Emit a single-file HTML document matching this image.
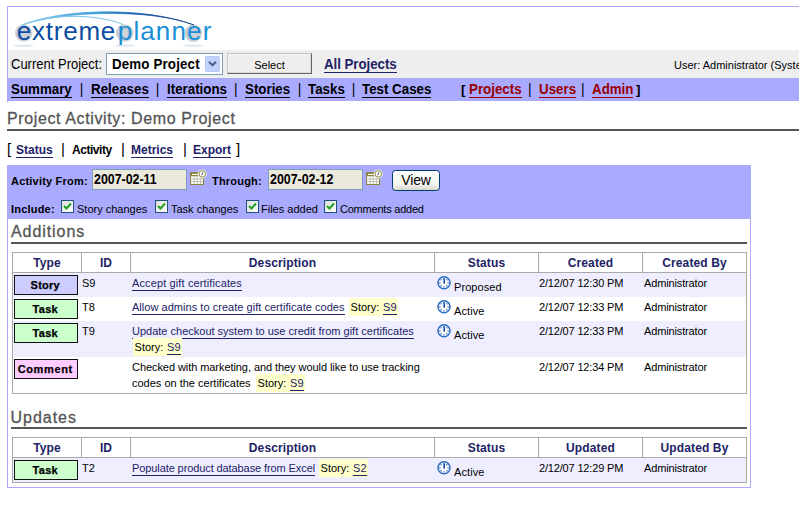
<!DOCTYPE html>
<html><head><meta charset="utf-8"><title>ExtremePlanner - Project Activity</title>
<style>
*{box-sizing:border-box;margin:0;padding:0}
html,body{width:799px;height:510px;overflow:hidden;background:#fff}
body{font-family:"Liberation Sans",Arial,sans-serif;font-size:11px;color:#000;position:relative}
.a{position:absolute;white-space:nowrap;line-height:1}
a{color:inherit;text-decoration:none}
#frame{left:7px;top:6px;width:900px;height:96px;border:1px solid #aaaaff;border-bottom:0}
#gray{left:8px;top:50px;width:900px;height:28px;background:#eeeeee}
#nav{left:8px;top:78px;width:900px;height:23px;background:#aaaaff}
.nv{font-size:13.33px;font-weight:bold;top:83px;color:#000}
.nv a{border-bottom:1px solid #000;padding-bottom:1px;display:inline-block}
.nv.r a{color:#990000;border-color:#990000}
.nv.sep{font-weight:normal;font-size:13.8px;top:82.6px}
.sy{display:inline-block;transform:scaleY(1.075);transform-origin:0 84.6%}
h1.a{font-size:16px;font-weight:normal;color:#555;letter-spacing:.62px;-webkit-text-stroke:.3px #555}
.rule{background:#555;height:2px}
.sn{font-size:12px;font-weight:bold;top:144px;color:#222266}
.sn a{border-bottom:1px solid #222266;padding-bottom:1px;display:inline-block}
#filter{left:7px;top:165px;width:744px;height:54px;background:#aaaaff}
#box{left:7px;top:218px;width:744px;height:270px;border:1px solid #aaaaff;border-top:0}
.lb{font-weight:bold;font-size:11px;letter-spacing:.2px}
.inp{height:21px;width:95px;background:#ebe9dc;border:1px solid #7f9db9;font-weight:bold;font-size:14px;padding:2px 0 0 .6px}
.inp span{display:inline-block;transform:scaleX(.885);transform-origin:0 0}
.cb{width:13px;height:13px;border:1px solid #1c5180;background:linear-gradient(135deg,#dcdcd7,#fff)}
.cb svg{position:absolute;left:1px;top:1px}
table{border-collapse:collapse}
.tb{left:12px;width:735px;border:1px solid #aaa;background:#fff}
.th{top:0;height:20px;border-right:1px solid #aaa;border-bottom:1px solid #aaa;font-weight:bold;font-size:12px;color:#222266;text-align:center;padding-top:4px;letter-spacing:.12px}
.row{left:0;width:733px}
.alt{background:#eeeeff}
.ty{left:1px;width:64px;height:20px;border:1px solid #111;font-weight:bold;font-size:11px;text-align:center;padding:4px 1.5px 0 0;letter-spacing:.25px;-webkit-text-stroke:.25px #000}
.story{background:#ccccff}.task{background:#ccffcc}.comment{background:#ffccff}
.lk{color:#222266;border-bottom:1px solid #222266;padding-bottom:1px;display:inline-block}
.st{background:#ffffcc;height:18px;width:49px;padding:4px 0 0 1.6px;word-spacing:.7px}
.st a{border-bottom:1px solid #222266;color:#222266;display:inline-block;padding-bottom:1px}
.t{font-size:11px}
</style></head><body>
<div class="a" id="frame"></div>
<div class="a" id="gray"></div>
<div class="a" id="nav"></div>

<!-- logo -->
<svg class="a" style="left:8px;top:7px" width="220" height="43" viewBox="8 7 220 43">
 <defs><linearGradient id="g1" x1="0" x2="1"><stop offset="0" stop-color="#8fd0f0"/><stop offset=".45" stop-color="#3a9ad8"/><stop offset=".7" stop-color="#1a55a8"/><stop offset="1" stop-color="#0a3a8c"/></linearGradient>
 <radialGradient id="g2"><stop offset="0" stop-color="#d4d6dc"/><stop offset=".8" stop-color="#c4c7cf"/><stop offset="1" stop-color="#d8dae0"/></radialGradient></defs>
 <circle cx="23.7" cy="33" r="8.8" fill="url(#g2)"/>
 <circle cx="124.8" cy="33" r="8.8" fill="url(#g2)"/>
 <circle cx="193.3" cy="33.2" r="8.8" fill="url(#g2)"/>
 <ellipse cx="23.7" cy="45.6" rx="10" ry="1.1" fill="#dce8f2"/>
 <ellipse cx="124.8" cy="45.6" rx="10" ry="1.1" fill="#dce8f2"/>
 <ellipse cx="193.3" cy="45.6" rx="10" ry="1.1" fill="#dce8f2"/>
 <path d="M21 25.5 C 55 10, 140 5, 194 25 C 150 8, 60 11, 21 25.5Z" fill="url(#g1)" stroke="url(#g1)" stroke-width=".7"/>
 <path d="M22 25.2 C 50 14, 95 13, 123 24.5" fill="none" stroke="#7cc4ea" stroke-width="1"/>
 <text x="16.8" y="39.7" font-family="Liberation Sans, Arial, sans-serif" font-size="26" fill="#0b4ea2" textLength="98.5" lengthAdjust="spacing">extreme</text>
 <text x="117.8" y="39.7" font-family="Liberation Sans, Arial, sans-serif" font-size="26" fill="#1c8fd6" textLength="93.5" lengthAdjust="spacing">planner</text>
</svg>

<div class="a" style="left:11px;top:58px;font-size:13px"><span class="sy">Current Project:</span></div>
<div class="a" style="left:106px;top:53px;width:117px;height:22px;border:1px solid #7f9db9;background:#fff"></div>
<div class="a" style="left:112px;top:58px;font-size:13.33px;font-weight:bold;letter-spacing:.15px"><span class="sy">Demo Project</span></div>
<svg class="a" style="left:205px;top:56px" width="15" height="16"><rect width="15" height="16" rx="2" fill="#c1d2fb"/><rect x=".5" y=".5" width="14" height="15" rx="2" fill="none" stroke="#b5c7f3"/><path d="M4 5.8 L7.5 9.3 L11 5.8" fill="none" stroke="#4d6185" stroke-width="2"/></svg>
<div class="a" style="left:227px;top:53px;width:85px;height:21px;background:#eeeeee;border:1px solid;border-color:#c4c4c4 #666 #666 #c4c4c4;box-shadow:inset -1px -1px 0 #d8d8d8,inset 1px 1px 0 #f8f8f8;font-size:11px;text-align:center;padding-top:6px"><span class="sy">Select</span></div>
<div class="a" style="left:324px;top:58px;font-size:13.33px;font-weight:bold;color:#222266;letter-spacing:-.05px"><a style="border-bottom:1px solid #222266;padding-bottom:1px;display:inline-block"><span class="sy">All Projects</span></a></div>
<div class="a" style="left:674px;top:60px;font-size:11px">User: Administrator (System Administrator)</div>

<div class="a nv" style="left:11px"><a><span class="sy">Summary</span></a></div>
<div class="a nv sep" style="left:79.75px">|</div>
<div class="a nv" style="left:91px"><a><span class="sy">Releases</span></a></div>
<div class="a nv sep" style="left:155.75px">|</div>
<div class="a nv" style="left:167px"><a><span class="sy">Iterations</span></a></div>
<div class="a nv sep" style="left:233.9px">|</div>
<div class="a nv" style="left:245px"><a><span class="sy">Stories</span></a></div>
<div class="a nv sep" style="left:297.75px">|</div>
<div class="a nv" style="left:308px"><a><span class="sy">Tasks</span></a></div>
<div class="a nv sep" style="left:351.75px">|</div>
<div class="a nv" style="left:362px"><a><span class="sy">Test Cases</span></a></div>
<div class="a nv" style="left:461px">[</div>
<div class="a nv r" style="left:469px"><a><span class="sy">Projects</span></a></div>
<div class="a nv sep" style="left:527.9px">|</div>
<div class="a nv r" style="left:539px"><a><span class="sy">Users</span></a></div>
<div class="a nv sep" style="left:581px">|</div>
<div class="a nv r" style="left:592px"><a><span class="sy">Admin</span></a></div>
<div class="a nv" style="left:636px">]</div>

<h1 class="a" style="left:7px;top:111px">Project Activity: Demo Project</h1>
<div class="a rule" style="left:7px;top:129px;width:800px"></div>

<div class="a sn" style="left:7px;top:141px;font-size:15px;color:#000;font-weight:normal">[</div>
<div class="a sn" style="left:16px"><a>Status</a></div>
<div class="a sn" style="left:61px;top:141px;font-size:15px;color:#000;font-weight:normal">|</div>
<div class="a sn" style="left:72px;color:#000;letter-spacing:-.45px">Activity</div>
<div class="a sn" style="left:121px;top:141px;font-size:15px;color:#000;font-weight:normal">|</div>
<div class="a sn" style="left:131px"><a>Metrics</a></div>
<div class="a sn" style="left:183px;top:141px;font-size:15px;color:#000;font-weight:normal">|</div>
<div class="a sn" style="left:193px"><a>Export</a></div>
<div class="a sn" style="left:236px;top:141px;font-size:15px;color:#000;font-weight:normal">]</div>

<div class="a" id="filter"></div>
<div class="a" id="box"></div>

<div class="a lb" style="left:11px;top:176px">Activity From:</div>
<div class="a inp" style="left:92px;top:169px"><span>2007-02-11</span></div>
<div class="a lb" style="left:212px;top:176px">Through:</div>
<div class="a inp" style="left:268px;top:169px"><span>2007-02-12</span></div>
<div class="a" style="left:392px;top:170px;width:48px;height:21px;border:1px solid #003c74;border-radius:3.5px;background:linear-gradient(#fff,#f4f3ee 70%,#dcd7cb);font-size:14px;text-align:center;padding-top:2px;letter-spacing:-.2px">View</div>

<div class="a lb" style="left:11px;top:204px">Include:</div>
<div class="a cb" style="left:61px;top:200px"><svg width="9" height="9"><path d="M1 4 L3.5 6.5 L8 1.5" fill="none" stroke="#21a121" stroke-width="2"/></svg></div>
<div class="a t" style="left:77px;top:204px">Story changes</div>
<div class="a cb" style="left:155px;top:200px"><svg width="9" height="9"><path d="M1 4 L3.5 6.5 L8 1.5" fill="none" stroke="#21a121" stroke-width="2"/></svg></div>
<div class="a t" style="left:171px;top:204px">Task changes</div>
<div class="a cb" style="left:246px;top:200px"><svg width="9" height="9"><path d="M1 4 L3.5 6.5 L8 1.5" fill="none" stroke="#21a121" stroke-width="2"/></svg></div>
<div class="a t" style="left:261px;top:204px">Files added</div>
<div class="a cb" style="left:324px;top:200px"><svg width="9" height="9"><path d="M1 4 L3.5 6.5 L8 1.5" fill="none" stroke="#21a121" stroke-width="2"/></svg></div>
<div class="a t" style="left:340px;top:204px;letter-spacing:-.22px">Comments added</div>

<h1 class="a" style="left:11px;top:224px;letter-spacing:.93px">Additions</h1>
<div class="a rule" style="left:11px;top:242px;width:736px"></div>

<h1 class="a" style="left:10.5px;top:410px;letter-spacing:.98px">Updates</h1>
<div class="a rule" style="left:11px;top:427px;width:736px"></div>

<div class="a tb" style="top:252px;height:142px"><div class="a th" style="left:0px;width:69px;">Type</div><div class="a th" style="left:69px;width:49px;">ID</div><div class="a th" style="left:118px;width:304px;">Description</div><div class="a th" style="left:422px;width:104px;">Status</div><div class="a th" style="left:526px;width:104px;">Created</div><div class="a th" style="left:630px;width:103px;border-right:0;">Created By</div><div class="a row alt" style="top:20px;height:24px"><div class="a ty story" style="top:2px">Story</div><div class="a t" style="left:69px;top:5px">S9</div><div class="a t" style="left:119px;top:5px;letter-spacing:0.125px"><a class="lk">Accept gift certificates</a></div><svg class="a" style="left:424px;top:3px" width="14" height="14" viewBox="0 0 14 14"><circle cx="7" cy="6.8" r="6" fill="#fff" stroke="#2d6cc0" stroke-width="1.5"/><g stroke="#2d6cc0" stroke-width="1.3"><path d="M7 2v1.3M7 10.3v1.3M2.2 6.8h1.3M10.5 6.8h1.3M3.6 3.4l.9.9M9.5 9.3l.9.9M10.4 3.4l-.9.9M4.5 9.3l-.9.9"/></g><path d="M7.2 2.6V7.6" stroke="#1c4fa0" stroke-width="1.7" fill="none"/></svg><div class="a t" style="left:441px;top:9px;letter-spacing:.08px">Proposed</div><div class="a t dt" style="left:526px;top:5px;letter-spacing:-.17px">2/12/07 12:30 PM</div><div class="a t" style="left:631px;top:5px;letter-spacing:-.14px">Administrator</div></div><div class="a row" style="top:44px;height:24px"><div class="a ty task" style="top:2px">Task</div><div class="a t" style="left:69px;top:5px">T8</div><div class="a t" style="left:119px;top:5px;letter-spacing:0.035px"><a class="lk">Allow admins to create gift certificate codes</a></div><div class="a t st" style="left:336px;top:1px">Story: <a>S9</a></div><svg class="a" style="left:424px;top:3px" width="14" height="14" viewBox="0 0 14 14"><circle cx="7" cy="6.8" r="6" fill="#fff" stroke="#2d6cc0" stroke-width="1.5"/><g stroke="#2d6cc0" stroke-width="1.3"><path d="M7 2v1.3M7 10.3v1.3M2.2 6.8h1.3M10.5 6.8h1.3M3.6 3.4l.9.9M9.5 9.3l.9.9M10.4 3.4l-.9.9M4.5 9.3l-.9.9"/></g><path d="M7.2 2.6V7.6" stroke="#1c4fa0" stroke-width="1.7" fill="none"/></svg><div class="a t" style="left:441px;top:9px;letter-spacing:.08px">Active</div><div class="a t dt" style="left:526px;top:5px;letter-spacing:-.17px">2/12/07 12:33 PM</div><div class="a t" style="left:631px;top:5px;letter-spacing:-.14px">Administrator</div></div><div class="a row alt" style="top:68px;height:36px"><div class="a ty task" style="top:2px">Task</div><div class="a t" style="left:69px;top:5px">T9</div><div class="a t" style="left:119px;top:5px;letter-spacing:0px"><a class="lk">Update checkout system to use credit from gift certificates</a></div><div class="a t st" style="left:120px;top:17px">Story: <a>S9</a></div><svg class="a" style="left:424px;top:3px" width="14" height="14" viewBox="0 0 14 14"><circle cx="7" cy="6.8" r="6" fill="#fff" stroke="#2d6cc0" stroke-width="1.5"/><g stroke="#2d6cc0" stroke-width="1.3"><path d="M7 2v1.3M7 10.3v1.3M2.2 6.8h1.3M10.5 6.8h1.3M3.6 3.4l.9.9M9.5 9.3l.9.9M10.4 3.4l-.9.9M4.5 9.3l-.9.9"/></g><path d="M7.2 2.6V7.6" stroke="#1c4fa0" stroke-width="1.7" fill="none"/></svg><div class="a t" style="left:441px;top:9px;letter-spacing:.08px">Active</div><div class="a t dt" style="left:526px;top:5px;letter-spacing:-.17px">2/12/07 12:33 PM</div><div class="a t" style="left:631px;top:5px;letter-spacing:-.14px">Administrator</div></div><div class="a row" style="top:104px;height:36px"><div class="a ty comment" style="top:2px;letter-spacing:.62px">Comment</div><div class="a t" style="left:119px;top:5px;letter-spacing:-0.067px">Checked with marketing, and they would like to use tracking</div><div class="a t" style="left:119px;top:21px;letter-spacing:0px">codes on the certificates</div><div class="a t st" style="left:243px;top:17px">Story: <a>S9</a></div><div class="a t dt" style="left:526px;top:5px;letter-spacing:-.17px">2/12/07 12:34 PM</div><div class="a t" style="left:631px;top:5px;letter-spacing:-.14px">Administrator</div></div></div>
<div class="a tb" style="top:437px;height:46px"><div class="a th" style="left:0px;width:69px;">Type</div><div class="a th" style="left:69px;width:49px;">ID</div><div class="a th" style="left:118px;width:304px;">Description</div><div class="a th" style="left:422px;width:104px;">Status</div><div class="a th" style="left:526px;width:104px;">Updated</div><div class="a th" style="left:630px;width:103px;border-right:0;">Updated By</div><div class="a row alt" style="top:20px;height:24px"><div class="a ty task" style="top:2px">Task</div><div class="a t" style="left:69px;top:5px">T2</div><div class="a t" style="left:119px;top:5px;letter-spacing:-0.097px"><a class="lk">Populate product database from Excel</a></div><div class="a t st" style="left:306px;top:1px">Story: <a>S2</a></div><svg class="a" style="left:424px;top:3px" width="14" height="14" viewBox="0 0 14 14"><circle cx="7" cy="6.8" r="6" fill="#fff" stroke="#2d6cc0" stroke-width="1.5"/><g stroke="#2d6cc0" stroke-width="1.3"><path d="M7 2v1.3M7 10.3v1.3M2.2 6.8h1.3M10.5 6.8h1.3M3.6 3.4l.9.9M9.5 9.3l.9.9M10.4 3.4l-.9.9M4.5 9.3l-.9.9"/></g><path d="M7.2 2.6V7.6" stroke="#1c4fa0" stroke-width="1.7" fill="none"/></svg><div class="a t" style="left:441px;top:9px;letter-spacing:.08px">Active</div><div class="a t dt" style="left:526px;top:5px;letter-spacing:-.17px">2/12/07 12:29 PM</div><div class="a t" style="left:631px;top:5px;letter-spacing:-.14px">Administrator</div></div></div>
<svg class="a" style="left:189px;top:168px" width="18" height="18" viewBox="0 0 18 18"><rect x="1.5" y="4.5" width="13" height="12" fill="#fff" stroke="#8a8444"/><rect x="2" y="5" width="12" height="3.3" fill="#8a8444"/><rect x="3" y="5.9" width="8" height="1.1" fill="#fffbe0"/><path d="M5.2 8.5v7.5M8.3 8.5v7.5M11.4 8.5v7.5M2 11h12M2 13.6h12" stroke="#bdbdb0" stroke-width="1" fill="none"/><circle cx="13.2" cy="5.9" r="4.5" fill="#fff"/><circle cx="13.2" cy="5.9" r="3.3" fill="#fff" stroke="#8a8444" stroke-width="1"/><path d="M13.6 4.2v2.1l-1.3.8" stroke="#444" stroke-width=".9" fill="none"/></svg><svg class="a" style="left:365px;top:168px" width="18" height="18" viewBox="0 0 18 18"><rect x="1.5" y="4.5" width="13" height="12" fill="#fff" stroke="#8a8444"/><rect x="2" y="5" width="12" height="3.3" fill="#8a8444"/><rect x="3" y="5.9" width="8" height="1.1" fill="#fffbe0"/><path d="M5.2 8.5v7.5M8.3 8.5v7.5M11.4 8.5v7.5M2 11h12M2 13.6h12" stroke="#bdbdb0" stroke-width="1" fill="none"/><circle cx="13.2" cy="5.9" r="4.5" fill="#fff"/><circle cx="13.2" cy="5.9" r="3.3" fill="#fff" stroke="#8a8444" stroke-width="1"/><path d="M13.6 4.2v2.1l-1.3.8" stroke="#444" stroke-width=".9" fill="none"/></svg>
</body></html>
